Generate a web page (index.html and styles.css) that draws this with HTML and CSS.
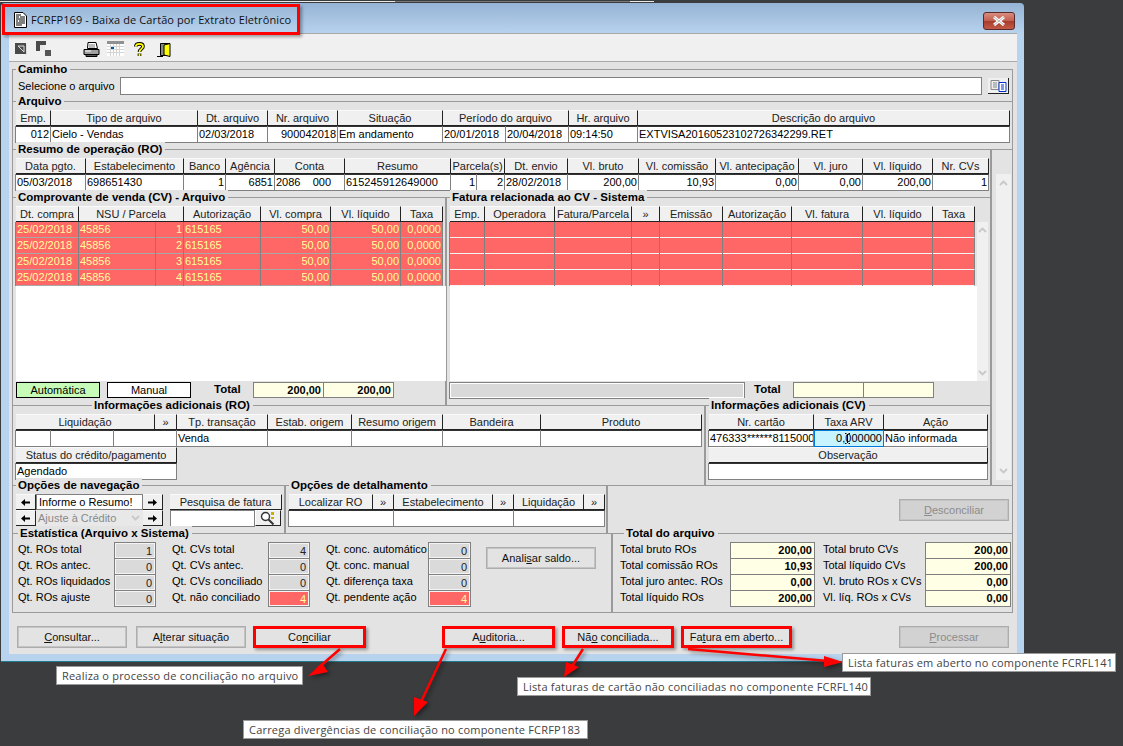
FILE: index.html
```html
<!DOCTYPE html>
<html lang="pt-BR">
<head>
<meta charset="utf-8">
<title>FCRFP169</title>
<link rel="stylesheet" href="styles.css">
</head>
<body>
<svg class="defs" width="0" height="0" aria-hidden="true">
  <symbol id="al" viewBox="0 0 9 9"><path d="M0 4.5 4 1v2.5h5v2H4V8z" fill="#000"/></symbol>
  <symbol id="ar" viewBox="0 0 9 9"><path d="M9 4.5 5 1v2.5H0v2h5V8z" fill="#000"/></symbol>
  <symbol id="up" viewBox="0 0 9 6"><path d="M1 5l3.5-3.5L8 5" fill="none" stroke="#c8c8c8" stroke-width="1.8"/></symbol>
  <symbol id="dn" viewBox="0 0 9 6"><path d="M1 1l3.500 3.500L8 1" fill="none" stroke="#c8c8c8" stroke-width="1.800"/></symbol>
</svg>
<div class="topline"></div>
<div class="win">
  <div class="title">
    <div class="title-flag">
      <svg class="doc" width="13" height="16" viewBox="0 0 13 16"><path d="M.5.500h8.500l3.500 3.500v11.500H.5z" fill="#fff" stroke="#000"/><path d="M2 3h5M2 5h3M6 5h5M2 7h9M2 9h2M5 9h6M2 11h9M2 13h6" stroke="#000"/></svg>
      <span>FCRFP169 - Baixa de Cartão por Extrato Eletrônico</span>
    </div>
    <div class="close"><svg width="16" height="10" viewBox="0 0 16 10"><path d="M3 1l10 8M13 1L3 9" stroke="#fff" stroke-width="3"/><path d="M3 1l10 8M13 1L3 9" stroke="#8a8a8a" stroke-width=".6"/></svg></div>
  </div>
  <div class="inner">
    <div class="toolbar">
      <svg class="ic i1" width="12" height="12" viewBox="0 0 12 12"><rect width="11" height="11" fill="#4a4a4a"/><rect x="11" y="1" width="1" height="11" fill="#ddd"/><path d="M3 3h6v6M9 9 3 3" fill="none" stroke="#ddd" stroke-width="1"/></svg>
      <svg class="ic i2" width="15" height="15" viewBox="0 0 15 15"><path d="M0 0h10v4H4v6H0z" fill="#4a4a4a"/><rect x="9" y="9" width="6" height="6" fill="#555"/><rect x="4" y="4" width="5" height="5" fill="#e8e8e8"/></svg>
      <svg class="ic i3" width="17" height="15" viewBox="0 0 17 15"><path d="M5 .5h8l1.500 6h-10z" fill="#fff" stroke="#000"/><path d="M1 7.500h15v5H1z" fill="#a0a0a0" stroke="#000"/><path d="M3 12.500h11v2H3z" fill="#555" stroke="#000"/><path d="M2 9h6" stroke="#fff"/><path d="M6 3h6M6 5h6" stroke="#777"/></svg>
      <svg class="ic i4" width="17" height="15" viewBox="0 0 17 15"><rect width="17" height="15" fill="#fff"/><rect width="17" height="3" fill="#909090"/><path d="M3.500 3v12M6.500 3v12M9.500 3v12M12.500 3v12M0 5.500h17M0 8.500h17M0 11.500h17" stroke="#d4d4d4"/><rect x="4" y="6" width="3" height="2" fill="#00589c"/></svg>
      <svg class="ic i5" width="11" height="15" viewBox="0 0 11 15"><path d="M1.800 4.500C2 1 9 1 9 4.500 9 7 5.500 6.800 5.500 10M5.500 11.500v2.500" fill="none" stroke="#000" stroke-width="3.600"/><path d="M1.800 4.500C2 1 9 1 9 4.500 9 7 5.500 6.800 5.500 10M5.500 11.500v2.500" fill="none" stroke="#ff0" stroke-width="1.800"/></svg>
      <svg class="ic i6" width="15" height="14" viewBox="0 0 15 14"><path d="M3.500.500h9v12h-9z" fill="#8a8a8a" stroke="#000"/><path d="M7 2l6-1.500v13L7 12z" fill="#ff0" stroke="#000"/><path d="M0 13.500h6" stroke="#000"/></svg>
    </div>
    <div class="client">
      <section class="group g-path">
        <div class="legend">Caminho</div>
        <div class="path-row">
          <span class="path-label">Selecione o arquivo</span>
          <div class="path-input"></div>
          <div class="path-btn"><svg width="17" height="12" viewBox="0 0 17 12"><path d="M1 .5h8v9H1z" fill="#eee" stroke="#888"/><path d="M3 3h4M3 5h4M3 7h4" stroke="#888"/><path d="M9 2.500h7v9H9z" fill="#fff" stroke="#0030d0"/><path d="M11 5h3M11 7h3M11 9h3" stroke="#0030d0"/></svg></div>
        </div>
      </section>

      <section class="group g-arq">
        <div class="legend">Arquivo</div>
        <div class="tb t-arq">
          <div class="h">Emp.</div><div class="h">Tipo de arquivo</div><div class="h">Dt. arquivo</div><div class="h">Nr. arquivo</div><div class="h">Situação</div><div class="h s2">Período do arquivo</div><div class="h">Hr. arquivo</div><div class="h">Descrição do arquivo</div>
          <div class="c r">012</div><div class="c">Cielo - Vendas</div><div class="c">02/03/2018</div><div class="c r">900042018</div><div class="c">Em andamento</div><div class="c">20/01/2018</div><div class="c">20/04/2018</div><div class="c">09:14:50</div><div class="c">EXTVISA20160523102726342299.RET</div>
        </div>
      </section>

      <div class="mid">
        <div class="mid-left">
          <section class="group g-ro">
            <div class="legend">Resumo de operação (RO)</div>
            <div class="tb t-ro">
              <div class="h">Data pgto.</div><div class="h">Estabelecimento</div><div class="h">Banco</div><div class="h">Agência</div><div class="h">Conta</div><div class="h">Resumo</div><div class="h s2">Parcela(s)</div><div class="h">Dt. envio</div><div class="h">Vl. bruto</div><div class="h">Vl. comissão</div><div class="h">Vl. antecipação</div><div class="h">Vl. juro</div><div class="h">Vl. líquido</div><div class="h">Nr. CVs</div>
              <div class="c">05/03/2018</div><div class="c">698651430</div><div class="c r">1</div><div class="c r">6851</div><div class="c pre">2086    000</div><div class="c">615245912649000</div><div class="c r">1</div><div class="c r">2</div><div class="c">28/02/2018</div><div class="c r">200,00</div><div class="c r">10,93</div><div class="c r">0,00</div><div class="c r">0,00</div><div class="c r">200,00</div><div class="c r">1</div>
            </div>
          </section>

          <div class="cv-row">
            <section class="group g-cv">
              <div class="legend">Comprovante de venda (CV) - Arquivo</div>
              <div class="tb t-cv">
                <div class="h">Dt. compra</div><div class="h s2">NSU / Parcela</div><div class="h">Autorização</div><div class="h">Vl. compra</div><div class="h">Vl. líquido</div><div class="h">Taxa</div>
                <div class="c red">25/02/2018</div><div class="c red">45856</div><div class="c red r">1</div><div class="c red">615165</div><div class="c red r">50,00</div><div class="c red r">50,00</div><div class="c red r">0,0000</div>
                <div class="c red">25/02/2018</div><div class="c red">45856</div><div class="c red r">2</div><div class="c red">615165</div><div class="c red r">50,00</div><div class="c red r">50,00</div><div class="c red r">0,0000</div>
                <div class="c red">25/02/2018</div><div class="c red">45856</div><div class="c red r">3</div><div class="c red">615165</div><div class="c red r">50,00</div><div class="c red r">50,00</div><div class="c red r">0,0000</div>
                <div class="c red">25/02/2018</div><div class="c red">45856</div><div class="c red r">4</div><div class="c red">615165</div><div class="c red r">50,00</div><div class="c red r">50,00</div><div class="c red r">0,0000</div>
              </div>
              <div class="blank b-cv"></div>
              <div class="foot">
                <div class="mode auto">Automática</div>
                <div class="mode">Manual</div>
                <div class="total-lbl tl-cv">Total</div>
                <div class="cream b tot">200,00</div>
                <div class="cream b tot">200,00</div>
              </div>
            </section>
            <section class="group g-fat">
              <div class="legend">Fatura relacionada ao CV - Sistema</div>
              <div class="fat-body">
                <div class="fat-main">
                  <div class="tb t-fat">
                    <div class="h">Emp.</div><div class="h">Operadora</div><div class="h">Fatura/Parcela</div><div class="h">»</div><div class="h">Emissão</div><div class="h">Autorização</div><div class="h">Vl. fatura</div><div class="h">Vl. líquido</div><div class="h">Taxa</div>
                    <div class="c red"></div><div class="c red"></div><div class="c red"></div><div class="c red"></div><div class="c red"></div><div class="c red"></div><div class="c red"></div><div class="c red"></div><div class="c red"></div>
                    <div class="c red"></div><div class="c red"></div><div class="c red"></div><div class="c red"></div><div class="c red"></div><div class="c red"></div><div class="c red"></div><div class="c red"></div><div class="c red"></div>
                    <div class="c red"></div><div class="c red"></div><div class="c red"></div><div class="c red"></div><div class="c red"></div><div class="c red"></div><div class="c red"></div><div class="c red"></div><div class="c red"></div>
                    <div class="c red"></div><div class="c red"></div><div class="c red"></div><div class="c red"></div><div class="c red"></div><div class="c red"></div><div class="c red"></div><div class="c red"></div><div class="c red"></div>
                  </div>
                  <div class="blank b-fat"></div>
                </div>
                <div class="vscroll vs-fat"><svg width="9" height="6"><use href="#up"/></svg><svg width="9" height="6"><use href="#dn"/></svg></div>
              </div>
              <div class="foot foot-fat">
                <div class="graybar"></div>
                <div class="total-lbl tl-fat">Total</div>
                <div class="cream tot"></div>
                <div class="cream tot"></div>
              </div>
            </section>
          </div>

          <div class="info-row">
            <section class="group g-iro">
              <div class="legend lg-iro">Informações adicionais (RO)</div>
              <div class="tb t-iro">
                <div class="h s3">Liquidação</div><div class="h">»</div><div class="h">Tp. transação</div><div class="h">Estab. origem</div><div class="h">Resumo origem</div><div class="h">Bandeira</div><div class="h">Produto</div>
                <div class="c"></div><div class="c"></div><div class="c s2"></div><div class="c">Venda</div><div class="c"></div><div class="c"></div><div class="c"></div><div class="c"></div>
              </div>
              <div class="tb t-st">
                <div class="h">Status do crédito/pagamento</div>
                <div class="c">Agendado</div>
              </div>
            </section>
            <section class="group g-icv">
              <div class="legend">Informações adicionais (CV)</div>
              <div class="tb t-icv">
                <div class="h">Nr. cartão</div><div class="h">Taxa ARV</div><div class="h">Ação</div>
                <div class="c">476333******8115000</div><div class="c r focus">0,000000<svg class="ibeam" width="5" height="11" viewBox="0 0 5 11"><path d="M0 .5h1.500M3.500.5H5M2.500 1v9M0 10.500h1.500M3.500 10.500H5" stroke="#000"/></svg></div><div class="c">Não informada</div>
                <div class="h s3">Observação</div>
                <div class="c s3"></div>
              </div>
            </section>
          </div>
        </div>
        <div class="mid-right">
          <div class="vscroll vs-main"><svg width="9" height="6"><use href="#up"/></svg><svg width="9" height="6"><use href="#dn"/></svg></div>
        </div>
      </div>

      <div class="nav-row">
        <section class="group g-nav">
          <div class="legend">Opções de navegação</div>
          <div class="nav-grid">
            <div class="h arrow"><svg width="9" height="9"><use href="#al"/></svg></div>
            <div class="nav-input">Informe o Resumo!</div>
            <div class="h arrow"><svg width="9" height="9"><use href="#ar"/></svg></div>
            <div class="h nav-search">Pesquisa de fatura</div>
            <div class="h arrow"><svg width="9" height="9"><use href="#al"/></svg></div>
            <div class="nav-combo"><span>Ajuste à Crédito</span><svg width="9" height="6"><use href="#dn"/></svg></div>
            <div class="h arrow"><svg width="9" height="9"><use href="#ar"/></svg></div>
            <div class="c nav-find"></div>
            <div class="h lupa"><svg width="16" height="14" viewBox="0 0 16 14"><circle cx="5.500" cy="5.500" r="4" fill="#fff" stroke="#333" stroke-width="1.400"/><path d="M8.500 8.500l5 5" stroke="#333" stroke-width="2"/><rect x="11" y="1" width="3" height="3" fill="#c8b000"/><rect x="11" y="6" width="3" height="2" fill="#c8b000"/></svg></div>
          </div>
        </section>
        <section class="group g-det">
          <div class="legend">Opções de detalhamento</div>
          <div class="tb t-det">
            <div class="h">Localizar RO</div><div class="h">»</div><div class="h">Estabelecimento</div><div class="h">»</div><div class="h">Liquidação</div><div class="h">»</div>
            <div class="c s2"></div><div class="c s2"></div><div class="c s2"></div>
          </div>
        </section>
        <section class="group g-act">
          <button class="btn off"><u>D</u>esconciliar</button>
        </section>
      </div>

      <div class="stat-row">
        <section class="group g-stat">
          <div class="legend">Estatística (Arquivo x Sistema)</div>
          <div class="stat-grid">
            <span class="sl">Qt. ROs total</span><div class="sv">1</div><span class="sl l2">Qt. CVs total</span><div class="sv">4</div><span class="sl l2">Qt. conc. automático</span><div class="sv">0</div>
            <button class="btn saldo">Anali<u>s</u>ar saldo...</button>
            <span class="sl">Qt. ROs antec.</span><div class="sv">0</div><span class="sl l2">Qt. CVs antec.</span><div class="sv">0</div><span class="sl l2">Qt. conc. manual</span><div class="sv">0</div>
            <span class="sl">Qt. ROs liquidados</span><div class="sv">0</div><span class="sl l2">Qt. CVs conciliado</span><div class="sv">0</div><span class="sl l2">Qt. diferença taxa</span><div class="sv">0</div>
            <span class="sl">Qt. ROs ajuste</span><div class="sv">0</div><span class="sl l2">Qt. não conciliado</span><div class="sv alert">4</div><span class="sl l2">Qt. pendente ação</span><div class="sv alert">4</div>
          </div>
        </section>
        <section class="group g-tot">
          <div class="legend lg-tot">Total do arquivo</div>
          <div class="tot-grid">
            <span class="sl">Total bruto ROs</span><div class="cream b">200,00</div><span class="sl">Total bruto CVs</span><div class="cream b">200,00</div>
            <span class="sl">Total comissão ROs</span><div class="cream b">10,93</div><span class="sl">Total líquido CVs</span><div class="cream b">200,00</div>
            <span class="sl">Total juro antec. ROs</span><div class="cream b">0,00</div><span class="sl">Vl. bruto ROs x CVs</span><div class="cream b">0,00</div>
            <span class="sl">Total líquido ROs</span><div class="cream b">200,00</div><span class="sl">Vl. líq. ROs x CVs</span><div class="cream b">0,00</div>
          </div>
        </section>
      </div>

      <div class="actions">
        <div class="act-set a-left">
          <button class="btn"><u>C</u>onsultar...</button>
          <button class="btn">A<u>l</u>terar situação</button>
          <button class="btn flag f-con">Co<u>n</u>ciliar</button>
        </div>
        <div class="act-set a-mid">
          <button class="btn flag f-aud">A<u>u</u>ditoria...</button>
          <button class="btn flag f-nao">Nã<u>o</u> conciliada...</button>
          <button class="btn flag f-fat">Fa<u>t</u>ura em aberto...</button>
        </div>
        <button class="btn off a-right"><u>P</u>rocessar</button>
      </div>
    </div>
  </div>
</div>

<svg class="arrows" width="1123" height="746" viewBox="0 0 1123 746">
  <g class="arrow-set">
    <path d="M340 649 317 669M446 649 420 704M583 649 571 668M688 649 828 661" fill="none" stroke="#f00" stroke-width="2.500"/>
    <path d="M308 676 322 663 328 672zM414 716 414 697 428 702zM564 677 566 662 579 667zM843 662 824 656 824 667z" fill="#f00"/>
  </g>
</svg>

<div class="tip t1">Realiza o processo de conciliação no arquivo</div>
<div class="tip t2">Carrega divergências de conciliação no componente FCRFP183</div>
<div class="tip t3">Lista faturas de cartão não conciliadas no componente FCRFL140</div>
<div class="tip t4">Lista faturas em aberto no componente FCRFL141</div>
</body>
</html>
```
FILE: styles.css
```css
* { box-sizing: border-box; }
html, body { margin: 0; padding: 0; }
body {
  width: 1123px; height: 746px; overflow: hidden; position: relative;
  background: #3b3c3e; color: #000;
  font: 11px/16px "Liberation Sans", Arial, sans-serif;
}
.defs { position: absolute; }
.topline {
  position: absolute; left: 0; top: 1px; width: 654px; height: 1px;
  background: linear-gradient(90deg, #e8e8e8 0 395px, #777 395px 630px, #e8e8e8 630px);
}
.win {
  position: absolute; left: 1px; top: 3px; width: 1023px; height: 659px;
  background: linear-gradient(180deg, #95b3d4 0, #b8d3ee 31px);
  border-bottom: 1px solid #1f7a8c; border-radius: 4px 4px 0 0;
  display: flex; flex-direction: column;
}
.title { height: 30px; display: flex; align-items: flex-start; justify-content: space-between; flex: none; }
.title-flag {
  position: relative; z-index: 2; margin: 1px 0 0 1px; width: 298px; height: 31px;
  border: 3px solid #f00; box-shadow: 2px 2px 3px rgba(0,0,0,.35);
  display: flex; align-items: center; padding-left: 9px; gap: 4px; white-space: nowrap;
  font: 11px "Open Sans", sans-serif; letter-spacing: .1px; color: #111;
}
.close {
  margin: 9px 9px 0 0; width: 32px; height: 18px; border: 1px solid #5a2a2a; border-radius: 3px;
  background: linear-gradient(180deg, #d98d80 0, #c26050 48%, #a83c2c 52%, #c25a48 100%);
  display: flex; align-items: center; justify-content: center;
}
.inner { margin: 0 7px 0 8px; width: 1008px; height: 621px; flex: none; background: #e3e3e3; display: flex; flex-direction: column; }
.toolbar { height: 29px; flex: none; background: #f0f0f0; border-top: 1px solid #a8a8a8; border-bottom: 1px solid #aaa; display: flex; align-items: flex-start; padding-left: 6px; }
.ic { flex: none; }
.i1 { margin-top: 9px; }
.i2 { margin: 7px 0 0 9px; }
.i3 { margin: 8px 0 0 32px; }
.i4 { margin: 7px 0 0 7px; }
.i5 { margin: 8px 0 0 10px; }
.i6 { margin: 9px 0 0 12px; }

.client { flex: 1; padding: 7px 4px 0 3px; display: flex; flex-direction: column; }
.group { border: 1px solid #9a9a9a; border-bottom: 0; padding: 0 3px; flex: none; }
.legend {
  width: fit-content; margin: -8px 0 2px 0; padding: 0 3px 0 2px; height: 14px;
  font-weight: 700; font-size: 11.500px; line-height: 14px; background: #e3e3e3; color: #000;
}
.g-path { height: 32px; width: 1001px; }
.g-path .legend { margin-bottom: 1px; }
.path-row { display: flex; align-items: flex-start; }
.path-label { width: 104px; padding-left: 2px; line-height: 18px; flex: none; }
.path-input { width: 863px; height: 18px; background: #fff; border: 1px solid #808080; }
.path-btn { margin: 1px 0 0 6px; width: 21px; height: 16px; background: #f0f0f0; border-right: 1px solid #222; border-bottom: 1px solid #222; display: flex; align-items: center; justify-content: center; }
.g-arq { height: 48px; width: 1001px; }

.tb { display: grid; grid-auto-rows: min-content; }
.h {
  height: 16px; line-height: 15px; text-align: center; white-space: nowrap; overflow: hidden;
  background: #f0f0f0; border-top: 1px solid #fafafa; border-right: 1px solid #222; border-bottom: 1px solid #222; color: #222;
}
.c {
  height: 17px; line-height: 15px; background: #fff; white-space: nowrap; overflow: hidden; padding: 0 1px;
  border: 1px solid #808080; border-left: 0; border-top-color: #333; box-shadow: -1px 0 0 #808080;
}
.r { text-align: right; }
.pre { white-space: pre; }
.s2 { grid-column: span 2; }
.s3 { grid-column: span 3; }
.red { height: 16px; background: #ff6666; color: #ffff99; border-top: 0; border-bottom-color: #a8a8a8; }
.t-arq { grid-template-columns: 35px 147px 70px 70px 105px 63px 63px 69px 372px; }
.mid { display: flex; height: 336px; flex: none; }
.mid-left { width: 979px; display: flex; flex-direction: column; }
.mid-right { width: 22px; border: 1px solid #9a9a9a; border-bottom: 0; padding: 24px 1px 5px 4px; }
.g-ro { height: 48px; }
.t-ro { grid-template-columns: 70px 98px 42px 49px 70px 106px 26px 28px 63px 71px 77px 83px 64px 70px 56px; }
.cv-row { display: flex; height: 208px; flex: none; }
.g-cv { width: 434px; padding-right: 0; }
.t-cv { grid-template-columns: 63px 77px 28px 77px 70px 70px 42px; width: 427px; }
.blank { background: #fff; }
.b-cv { height: 95px; width: 430px; }
.foot { display: flex; align-items: flex-start; margin-top: 1px; height: 17px; }
.mode { width: 84px; height: 16px; line-height: 14px; margin-right: 7px; text-align: center; border: 1px solid #000; background: #fff; }
.auto { background: #c6fbb8; }
.total-lbl { font-weight: 700; font-size: 11.500px; line-height: 14px; }
.tl-cv { margin: 0 12px 0 16px; width: 27px; }
.cream { height: 16px; line-height: 15px; background: #ffffe6; border: 1px solid #808080; text-align: right; padding: 0 2px; }
.b { font-weight: 700; }
.tot { width: 71px; margin-right: -1px; }
.g-fat { width: 545px; padding-right: 2px; }
.fat-body { display: flex; }
.fat-main { width: 527px; }
.t-fat { grid-template-columns: 35px 70px 77px 28px 63px 69px 71px 70px 42px; width: 525px; }
.t-fat .red { border-bottom-color: #f4f4f4; }
.b-fat { height: 95px; }
.vscroll { display: flex; flex-direction: column; align-items: center; justify-content: space-between; background: #f0f0f0; }
.vs-fat { width: 11px; height: 159px; margin-top: 16px; padding: 5px 0; }
.vs-main { width: 15px; height: 306px; padding: 6px 0; }
.foot-fat { margin-left: -1px; }
.graybar { width: 296px; height: 17px; background: #d9d9d9; border: 1px solid #808080; outline: 1px solid #fff; outline-offset: -2px; }
.tl-fat { margin: 0 12px 0 9px; width: 27px; }
.info-row { display: flex; height: 80px; flex: none; }
.g-iro { width: 693px; }
.lg-iro { margin-left: 76px; }
.t-iro { grid-template-columns: 35px 63px 41px 22px 91px 84px 91px 98px 161px; }
.t-st { grid-template-columns: 161px; }
.g-icv { width: 286px; }
.t-icv { grid-template-columns: 105px 70px 104px; }
.focus { background: #c8f4ff; border: 1px solid #0078d7; position: relative; box-shadow: none; }
.ibeam { position: absolute; left: 30px; top: 2px; }

.nav-row { display: flex; height: 48px; flex: none; }
.g-nav { width: 273px; }
.nav-grid { display: grid; grid-template-columns: 20px 107px 20px 7px 85px 27px; grid-auto-rows: 16px; }
.arrow { display: flex; align-items: center; justify-content: center; }
.nav-input { background: #fff; border: 1px solid #808080; padding: 0 2px; line-height: 14px; }
.nav-search { grid-column: 5 / span 2; }
.nav-combo { background: #e8e8e8; color: #888; display: flex; align-items: center; justify-content: space-between; padding: 0 3px 0 2px; }
.nav-find { grid-column: 5; box-shadow: none; border: 1px solid #808080; }
.lupa { display: flex; align-items: center; justify-content: center; border-left: 1px solid #fff; width: 26px; }
.g-det { width: 322px; }
.t-det { grid-template-columns: 84px 21px 99px 21px 70px 21px; }
.g-act { width: 406px; display: flex; justify-content: flex-end; align-items: flex-start; padding: 13px 3px 0 0; }

.btn {
  width: 110px; height: 22px; padding: 0; font: inherit; color: #111; background: #e3e3e3;
  border: 1px solid #adadad; outline: 1px solid #c4c4c4; outline-offset: -2px;
}
.btn.off { background: #d2d2d2; color: #8c8c8c; }
.stat-row { display: flex; height: 80px; flex: none; border-bottom: 1px solid #9a9a9a; width: 1001px; }
.g-stat { width: 600px; padding-left: 5px; }
.stat-grid { display: grid; grid-template-columns: 96px 42px 112px 42px 118px 43px 125px; grid-auto-rows: 16px; }
.l2 { padding-left: 16px; }
.sl { line-height: 15px; white-space: nowrap; }
.sv { height: 17px; margin-bottom: -1px; background: #dadada; border: 1px solid #808080; outline: 1px solid #f4f4f4; outline-offset: -2px; text-align: right; padding-right: 3px; line-height: 16px; color: #222; }
.alert { background: #ff6666; color: #ffff99; }
.saldo { grid-column: 7; grid-row: 1 / span 4; margin-top: 5px; justify-self: end; }
.g-tot { width: 401px; padding-left: 7px; }
.lg-tot { margin-left: 4px; }
.tot-grid { display: grid; grid-template-columns: 110px 85px 8px 102px 86px; grid-auto-rows: 16px; }
.tot-grid .sl:nth-of-type(2n) { grid-column: 4; }
.tot-grid .cream { height: 17px; }
.tot-grid .cream:nth-child(4n) { grid-column: 5; }
.actions { display: flex; align-items: flex-start; padding: 13px 4px 0 5px; height: 36px; }
.act-set { display: flex; }
.a-left .btn + .btn { margin-left: 9px; }
.a-left .btn.flag { margin-left: 7px; }
.a-mid { margin-left: 76px; gap: 7px; }
.a-right { margin-left: auto; }
.flag { border: 3px solid #f00; outline: 0; box-shadow: 2px 2px 3px rgba(0,0,0,.35); position: relative; }
.f-con, .f-aud { width: 113px; }
.f-nao { width: 112px; }
.f-fat { width: 111px; }

.arrows { position: absolute; left: 0; top: 0; pointer-events: none; }
.arrow-set { filter: drop-shadow(2px 2px 2px rgba(0,0,0,.45)); }
.tip {
  position: absolute; height: 19px; background: #fff; color: #444; white-space: nowrap;
  border: 1px solid #9a9a9a; padding-left: 5px;
  font: 11px/17px "Open Sans", sans-serif; letter-spacing: .2px;
}
.t1 { left: 56px; top: 666px; width: 247px; }
.t2 { left: 243px; top: 720px; width: 345px; }
.t3 { left: 517px; top: 677px; width: 354px; }
.t4 { left: 842px; top: 653px; width: 274px; }
```
